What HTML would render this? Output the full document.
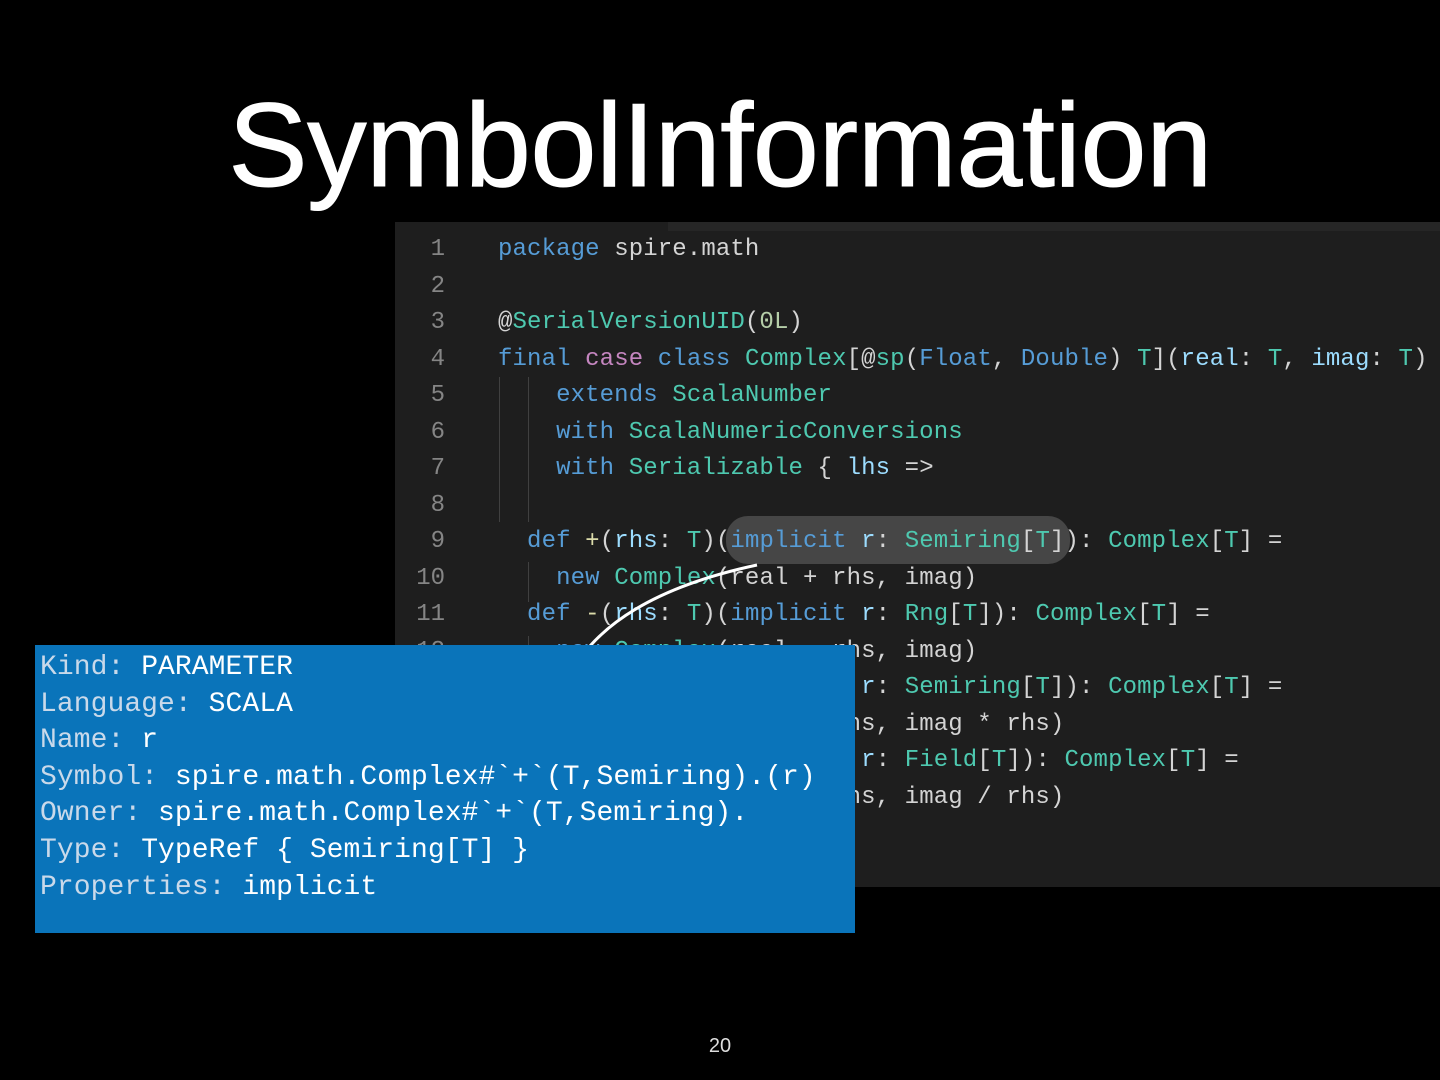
<!DOCTYPE html>
<html><head><meta charset="utf-8"><style>
html,body{margin:0;padding:0;background:#000;width:1440px;height:1080px;overflow:hidden;position:relative;font-family:"Liberation Sans",sans-serif}
.title{position:absolute;left:0;width:1440px;top:76px;text-align:center;color:#fff;font-size:119px;line-height:140px;letter-spacing:-0.5px;-webkit-text-stroke:1px #fff}
.ed{position:absolute;left:395px;top:222px;width:1045px;height:665px;background:#1e1e1e;overflow:hidden}
.strip{position:absolute;left:273px;top:0;right:0;height:9px;background:#262626}
.ln{position:absolute;left:0;width:50px;text-align:right;color:#858585;font:24px/36.5px "Liberation Mono",monospace}
.code{position:absolute;left:103px;white-space:pre;color:#d4d4d4;font:24px/36.5px "Liberation Mono",monospace;letter-spacing:0.12px}
.k{color:#569cd6}.t{color:#4ec9b0}.p{color:#c586c0}.v{color:#9cdcfe}.n{color:#b5cea8}.f{color:#dcdcaa}
.g{position:absolute;width:1px;background:#404040}
.pill{position:absolute;left:331px;top:294px;width:344px;height:48px;border-radius:22px;background:#464646}
.pop{position:absolute;left:35px;top:645px;width:820px;height:288px;background:#0a74ba}
.pl{position:absolute;left:5px;white-space:pre;color:#fff;font:28px/36.6px "Liberation Mono",monospace;letter-spacing:0.06px}
.lb{color:#c9d9ea}
.num{position:absolute;left:0;width:1440px;text-align:center;top:1035px;color:#ddd;font-size:20px}
</style></head><body>
<div class="title">SymbolInformation</div>
<div class="ed">
<div class="strip"></div>
<div class="pill"></div>
<div class="g" style="left:104px;top:155px;height:145px"></div>
<div class="g" style="left:133px;top:155px;height:145px"></div>
<div class="g" style="left:133px;top:340px;height:40px"></div>
<div class="g" style="left:133px;top:414px;height:40px"></div>
<div class="g" style="left:133px;top:487px;height:40px"></div>
<div class="g" style="left:133px;top:560px;height:40px"></div>
<div class="ln" style="top:10px">1<br>2<br>3<br>4<br>5<br>6<br>7<br>8<br>9<br>10<br>11<br>12<br>13<br>14<br>15<br>16</div>
<div class="code" style="top:10px"><span class="k">package</span> spire.math

@<span class="t">SerialVersionUID</span>(<span class="n">0L</span>)
<span class="k">final</span> <span class="p">case</span> <span class="k">class</span> <span class="t">Complex</span>[@<span class="t">sp</span>(<span class="k">Float</span>, <span class="k">Double</span>) <span class="t">T</span>](<span class="v">real</span>: <span class="t">T</span>, <span class="v">imag</span>: <span class="t">T</span>)
    <span class="k">extends</span> <span class="t">ScalaNumber</span>
    <span class="k">with</span> <span class="t">ScalaNumericConversions</span>
    <span class="k">with</span> <span class="t">Serializable</span> { <span class="v">lhs</span> =&gt;

  <span class="k">def</span> <span class="f">+</span>(<span class="v">rhs</span>: <span class="t">T</span>)(<span class="k">implicit</span> <span class="v">r</span>: <span class="t">Semiring</span>[<span class="t">T</span>]): <span class="t">Complex</span>[<span class="t">T</span>] =
    <span class="k">new</span> <span class="t">Complex</span>(real + rhs, imag)
  <span class="k">def</span> <span class="f">-</span>(<span class="v">rhs</span>: <span class="t">T</span>)(<span class="k">implicit</span> <span class="v">r</span>: <span class="t">Rng</span>[<span class="t">T</span>]): <span class="t">Complex</span>[<span class="t">T</span>] =
    <span class="k">new</span> <span class="t">Complex</span>(real - rhs, imag)
  <span class="k">def</span> <span class="f">*</span>(<span class="v">rhs</span>: <span class="t">T</span>)(<span class="k">implicit</span> <span class="v">r</span>: <span class="t">Semiring</span>[<span class="t">T</span>]): <span class="t">Complex</span>[<span class="t">T</span>] =
    <span class="k">new</span> <span class="t">Complex</span>(real * rhs, imag * rhs)
  <span class="k">def</span> <span class="f">/</span>(<span class="v">rhs</span>: <span class="t">T</span>)(<span class="k">implicit</span> <span class="v">r</span>: <span class="t">Field</span>[<span class="t">T</span>]): <span class="t">Complex</span>[<span class="t">T</span>] =
    <span class="k">new</span> <span class="t">Complex</span>(real / rhs, imag / rhs)</div>
</div>
<svg style="position:absolute;left:0;top:0" width="1440" height="1080"><path d="M757 565 Q640 590 590 646" stroke="#fff" stroke-width="3" fill="none"/></svg>
<div class="pop">
<div class="pl" style="top:5px"><span class="lb">Kind:</span> PARAMETER
<span class="lb">Language:</span> SCALA
<span class="lb">Name:</span> r
<span class="lb">Symbol:</span> spire.math.Complex#`+`(T,Semiring).(r)
<span class="lb">Owner:</span> spire.math.Complex#`+`(T,Semiring).
<span class="lb">Type:</span> TypeRef { Semiring[T] }
<span class="lb">Properties:</span> implicit</div>
</div>
<div class="num">20</div>
</body></html>
